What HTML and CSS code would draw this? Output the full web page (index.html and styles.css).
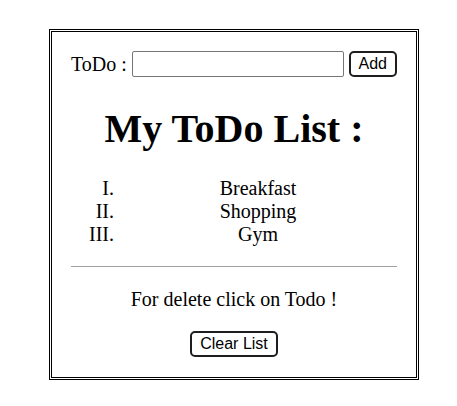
FILE: index.html
```html
<!DOCTYPE html>
<html>
<head>
<meta charset="utf-8">
<link rel="stylesheet" href="styles.css">
</head>
<body>
<div class="box">
  <div class="row">
    <label class="label">ToDo :</label>
    <input class="field" type="text">
    <button class="btn">Add</button>
  </div>
  <h1 class="title">My ToDo List :</h1>
  <ol class="list">
    <li>Breakfast</li>
    <li>Shopping</li>
    <li>Gym</li>
  </ol>
  <hr class="rule">
  <p class="hint">For delete click on Todo !</p>
  <div class="actions"><button class="btn">Clear List</button></div>
</div>
</body>
</html>
```
FILE: styles.css
```css
html, body { background: #fff; }
body {
  margin: 8px;
  font-family: "Liberation Serif", "Times New Roman", serif;
  font-size: 20px;
  color: #000;
}
.box {
  width: 326px;
  margin: 21px 0 0 41px;
  border: 3px double #000;
  padding: 18px 19px 20px 19px;
}
.row {
  display: flex;
  align-items: center;
  gap: 5px;
  height: 28px;
}
.label { white-space: nowrap; }
.field {
  flex: 1;
  height: 26px;
  box-sizing: border-box;
  border: 1px solid #767676;
  border-radius: 2px;
  padding: 1px 2px;
  margin: 0;
  font-size: 14px;
  background: #fff;
}
.btn {
  font-family: "Liberation Sans", Arial, sans-serif;
  font-size: 16px;
  color: #000;
  background: #fff;
  border: 2px solid #1e1e1e;
  border-radius: 5px;
  padding: 1px 8px;
  margin: 0;
  height: 26px;
  line-height: 18px;
}
.title {
  font-size: 40px;
  font-weight: bold;
  text-align: center;
  margin: 28px 0 0;
  line-height: 46px;
}
.list {
  list-style-type: upper-roman;
  margin: 25px 0 0;
  padding-left: 48px;
  text-align: center;
  line-height: 23px;
}
.rule {
  border: 0;
  border-top: 1px solid #a0a0a0;
  margin: 20px 0 0;
  height: 0;
}
.hint {
  text-align: center;
  margin: 21px 0 0;
  line-height: 23px;
}
.actions {
  text-align: center;
  margin-top: 20px;
}
```
